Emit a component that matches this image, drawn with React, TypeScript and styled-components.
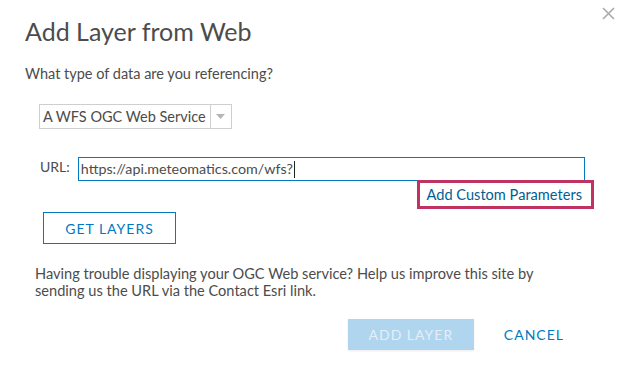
import { FC } from "react";
import styled, { createGlobalStyle } from "styled-components";

const blue = "#0079c1";
const text = "#4c4c4c";

const GlobalStyle = createGlobalStyle`
	html, body {
		margin: 0;
		background: #ffffff;
	}
	body {
		font-family: Lato, "Open Sans", sans-serif;
		color: ${text};
	}
`;

const App: FC = () => {
	return (
		<>
			<GlobalStyle />
			<Dialog>
				<CloseButton aria-label="Close">
					<svg width="13" height="13" viewBox="0 0 13 13">
						<path d="M1 1 L12 12 M12 1 L1 12" stroke="#aaaaaa" strokeWidth="1.6" />
					</svg>
				</CloseButton>
				<Title>Add Layer from Web</Title>
				<Question>What type of data are you referencing?</Question>
				<Select>
					<SelectValue>A WFS OGC Web Service</SelectValue>
					<SelectArrow>
						<svg width="9" height="5" viewBox="0 0 9 5">
							<path d="M0 0 L9 0 L4.5 5 Z" fill="#b5b5b5" />
						</svg>
					</SelectArrow>
				</Select>
				<UrlRow>
					<UrlLabel>URL:</UrlLabel>
					<UrlInput>
						https://api.meteomatics.com/wfs?<Caret />
					</UrlInput>
				</UrlRow>
				<ParamsRow>
					<ParamsLink>Add Custom Parameters</ParamsLink>
				</ParamsRow>
				<OutlineButton>GET LAYERS</OutlineButton>
				<Help>
					Having trouble displaying your OGC Web service? Help us improve this site by
					<br />
					sending us the URL via the Contact Esri link.
				</Help>
				<Footer>
					<PrimaryButton disabled>ADD LAYER</PrimaryButton>
					<TextButton>CANCEL</TextButton>
				</Footer>
			</Dialog>
		</>
	);
};

const Dialog = styled.div`
	position: relative;
	width: 619px;
	height: 365px;
	box-sizing: border-box;
	padding: 16px 25px 0 25px;
	display: flex;
	flex-direction: column;
	align-items: flex-start;
`;

const CloseButton = styled.button`
	position: absolute;
	top: 6px;
	right: 4px;
	border: 0;
	background: none;
	padding: 0;
	width: 14px;
	height: 14px;
	display: flex;
	align-items: center;
	justify-content: center;
`;

const Title = styled.h1`
	margin: 0;
	font-size: 25px;
	font-weight: 400;
	line-height: 30px;
	color: ${text};
`;

const Question = styled.p`
	margin: 18px 0 0 0;
	font-size: 14.5px;
	line-height: 20px;
`;

const Select = styled.div`
	margin: 20px 0 0 14px;
	display: flex;
	align-items: stretch;
	height: 25px;
	box-sizing: border-box;
	border: 1px solid #cfcfcf;
`;

const SelectValue = styled.span`
	padding: 0 4px 0 3px;
	font-size: 14.5px;
	line-height: 23px;
	color: ${text};
	border-right: 1px solid #cfcfcf;
`;

const SelectArrow = styled.span`
	width: 20px;
	display: flex;
	align-items: center;
	justify-content: center;
`;

const UrlRow = styled.div`
	margin-top: 28px;
	padding-left: 15px;
	display: flex;
	align-items: flex-start;
	gap: 8px;
	width: calc(100% - 9px);
	box-sizing: border-box;
`;

const UrlLabel = styled.span`
	font-size: 14px;
	line-height: 18px;
	padding-top: 1px;
`;

const UrlInput = styled.div`
	flex: 1;
	height: 24px;
	box-sizing: border-box;
	border: 1px solid ${blue};
	padding: 0 2px;
	font-size: 14.3px;
	line-height: 22px;
	color: ${text};
	display: flex;
	align-items: center;
`;

const Caret = styled.span`
	display: inline-block;
	width: 1px;
	height: 17px;
	background: #222;
	margin-left: 1px;
`;

const ParamsRow = styled.div`
	align-self: stretch;
	display: flex;
	justify-content: flex-end;
	margin-top: -1px;
`;

const ParamsLink = styled.a`
	border: 3px solid #bf3262;
	padding: 0 9px 0 7px;
	height: 29px;
	box-sizing: border-box;
	font-size: 14.6px;
	line-height: 23px;
	color: #005e95;
	cursor: pointer;
`;

const OutlineButton = styled.button`
	margin: 3px 0 0 18px;
	width: 133px;
	height: 32px;
	background: #fff;
	border: 1px solid ${blue};
	color: ${blue};
	font-family: inherit;
	font-size: 14px;
	letter-spacing: 1px;
`;

const Help = styled.p`
	margin: 21px 0 0 10px;
	font-size: 14.6px;
	line-height: 17px;
	color: ${text};
`;

const Footer = styled.div`
	align-self: stretch;
	margin-top: 20px;
	display: flex;
	justify-content: flex-end;
	align-items: center;
	gap: 30px;
	padding-right: 30px;
`;

const PrimaryButton = styled.button`
	width: 126px;
	height: 31px;
	border: 0;
	background: #b0d5ef;
	color: #e3eff8;
	font-family: inherit;
	font-size: 14px;
	letter-spacing: 1px;
	box-shadow: 0 1px 2px rgba(0, 0, 0, 0.08);
`;

const TextButton = styled.button`
	border: 0;
	background: none;
	padding: 0;
	color: ${blue};
	font-family: inherit;
	font-size: 14px;
	letter-spacing: 1px;
`;

export default App;
